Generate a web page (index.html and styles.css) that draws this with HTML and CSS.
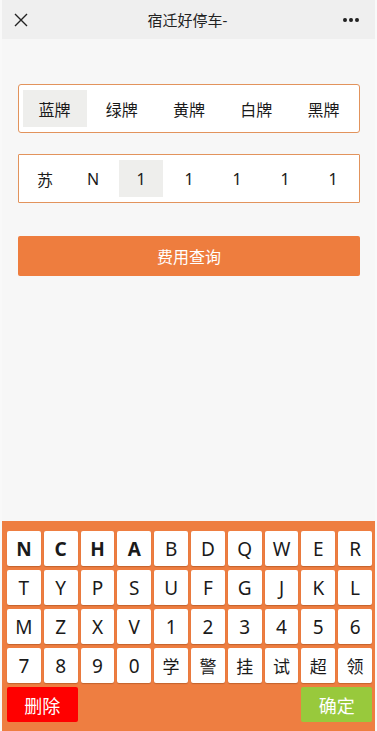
FILE: index.html
```html
<!DOCTYPE html>
<html lang="zh">
<head>
<meta charset="utf-8">
<title>宿迁好停车-</title>
<link rel="stylesheet" href="styles.css">
</head>
<body>
<div class="app">
  <header class="topbar">
    <svg class="close" width="14" height="14" viewBox="0 0 14 14"><path d="M1 1L13 13M13 1L1 13" stroke="#222" stroke-width="1.4" fill="none"/></svg>
    <div class="title">宿迁好停车-</div>
    <div class="dots"><span></span><span></span><span></span></div>
  </header>

  <main class="content">
    <div class="box types">
      <div class="cell active">蓝牌</div>
      <div class="cell">绿牌</div>
      <div class="cell">黄牌</div>
      <div class="cell">白牌</div>
      <div class="cell">黑牌</div>
    </div>
    <div class="box plate">
      <div class="cell">苏</div>
      <div class="cell">N</div>
      <div class="cell active">1</div>
      <div class="cell">1</div>
      <div class="cell">1</div>
      <div class="cell">1</div>
      <div class="cell">1</div>
    </div>
    <button class="query">费用查询</button>
  </main>

  <section class="keyboard">
    <div class="key bold">N</div>
    <div class="key bold">C</div>
    <div class="key bold">H</div>
    <div class="key bold">A</div>
    <div class="key">B</div>
    <div class="key">D</div>
    <div class="key">Q</div>
    <div class="key">W</div>
    <div class="key">E</div>
    <div class="key">R</div>
    <div class="key">T</div>
    <div class="key">Y</div>
    <div class="key">P</div>
    <div class="key">S</div>
    <div class="key">U</div>
    <div class="key">F</div>
    <div class="key">G</div>
    <div class="key">J</div>
    <div class="key">K</div>
    <div class="key">L</div>
    <div class="key">M</div>
    <div class="key">Z</div>
    <div class="key">X</div>
    <div class="key">V</div>
    <div class="key">1</div>
    <div class="key">2</div>
    <div class="key">3</div>
    <div class="key">4</div>
    <div class="key">5</div>
    <div class="key">6</div>
    <div class="key">7</div>
    <div class="key">8</div>
    <div class="key">9</div>
    <div class="key">0</div>
    <div class="key cn">学</div>
    <div class="key cn">警</div>
    <div class="key cn">挂</div>
    <div class="key cn">试</div>
    <div class="key cn">超</div>
    <div class="key cn">领</div>
    <div class="action del">删除</div>
    <div class="action ok">确定</div>
  </section>
</div>
</body>
</html>
```

FILE: styles.css
```css
html, body {
  margin: 0;
  padding: 0;
  background: #f9f9f9;
}
body {
  font-family: "Noto Sans", "Noto Sans CJK SC", sans-serif;
  color: #1a1a1a;
}
.app {
  margin: 0 2px;
  width: 373px;
  min-height: 731px;
  display: flex;
  flex-direction: column;
  background: #f7f7f7;
}
.topbar {
  height: 39px;
  background: #efefef;
  display: flex;
  align-items: center;
  padding: 0 16px 0 12px;
  box-sizing: border-box;
}
.close {
  display: block;
  width: 14px;
  height: 14px;
}
.title {
  flex: 1;
  text-align: center;
  font-size: 15px;
  color: #222;
  padding-left: 4px;
}
.dots {
  display: flex;
  gap: 2.5px;
  width: 16px;
}
.dots span {
  width: 4px;
  height: 4px;
  border-radius: 50%;
  background: #222;
}
.content {
  padding: 45px 15px 0 16px;
}
.box {
  display: flex;
  border: 1px solid #e2935c;
  border-radius: 3px;
  background: #fff;
  padding: 5px 2px;
  height: 49px;
  box-sizing: border-box;
}
.box .cell {
  flex: 1;
  margin: 0 2px;
  display: flex;
  align-items: center;
  justify-content: center;
  font-size: 16px;
  color: #1a1a1a;
}
.box .cell.active {
  background: #eeeeec;
}
.types .cell {
  margin: 0 1.5px;
}
.plate {
  margin-top: 21px;
  border-radius: 1px;
}
.query {
  display: block;
  width: 100%;
  height: 40px;
  margin-top: 33px;
  border: none;
  border-radius: 2px;
  background: #ee7d3e;
  color: #fff;
  font-family: "Noto Sans CJK SC", sans-serif;
  font-size: 16px;
  padding: 0;
}
.keyboard {
  margin-top: auto;
  background: #ee7e41;
  padding: 10px 3px 9px 5px;
  display: grid;
  grid-template-columns: repeat(10, 1fr);
  grid-auto-rows: 35px;
  gap: 4px 3px;
}
.key {
  background: #fff;
  border-radius: 2px;
  box-shadow: 0 1px 1px rgba(120, 50, 10, 0.35);
  display: flex;
  align-items: center;
  justify-content: center;
  font-size: 19px;
  color: #1a1a1a;
}
.key.bold {
  font-weight: 700;
}
.key.cn {
  font-family: "Noto Sans CJK SC", sans-serif;
  font-size: 17px;
}
.action {
  grid-column: span 2;
  border-radius: 2px;
  display: flex;
  align-items: center;
  justify-content: center;
  color: #fff;
  font-family: "Noto Sans CJK SC", sans-serif;
  font-size: 18px;
}
.del {
  background: #ff0000;
}
.ok {
  grid-column: 9 / span 2;
  background: #98c93c;
}
```
